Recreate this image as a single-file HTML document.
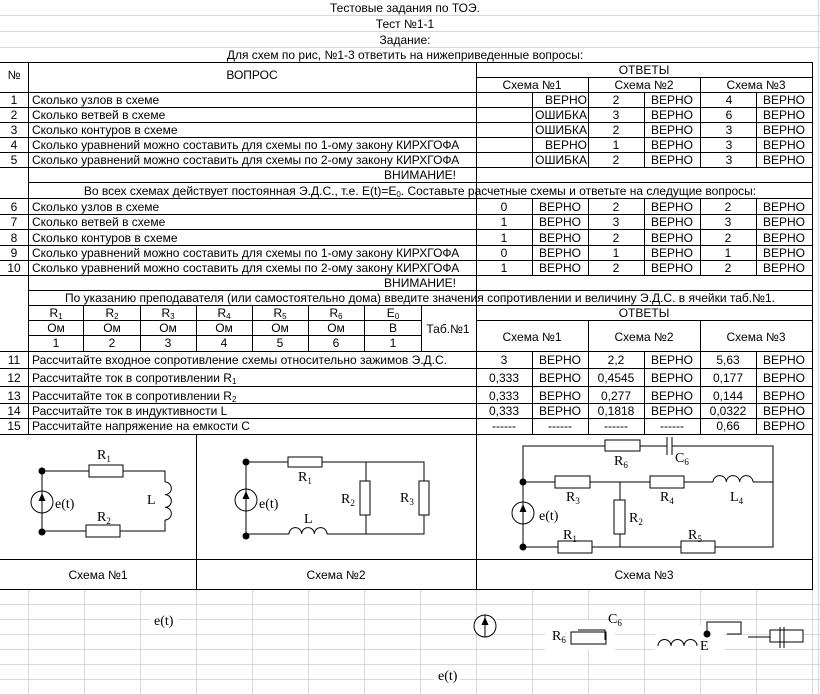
<!DOCTYPE html>
<html><head><meta charset="utf-8">
<style>
html,body{margin:0;padding:0;background:#fff;width:820px;height:695px;overflow:hidden}
svg{position:absolute;left:0;top:0}
text{font-family:"Liberation Sans",Arial,sans-serif;font-size:12px;fill:#000}
.s{font-family:"Liberation Serif","Times New Roman",serif;font-size:14px}
.m{text-anchor:middle}
.e{text-anchor:end}
</style></head><body>
<svg width="820" height="695" viewBox="0 0 820 695">
<g stroke="#d0d7e5" stroke-width="1" shape-rendering="crispEdges">
<line x1="0" y1="15.5" x2="820" y2="15.5"/><line x1="0" y1="31.5" x2="820" y2="31.5"/><line x1="0" y1="47.5" x2="820" y2="47.5"/>
<line x1="818.5" y1="0" x2="818.5" y2="695"/>
<line x1="0" y1="604.5" x2="820" y2="604.5"/><line x1="0" y1="619.5" x2="820" y2="619.5"/><line x1="0" y1="634.5" x2="820" y2="634.5"/><line x1="0" y1="649.5" x2="820" y2="649.5"/><line x1="0" y1="664.5" x2="820" y2="664.5"/><line x1="0" y1="679.5" x2="820" y2="679.5"/><line x1="0" y1="694.5" x2="820" y2="694.5"/>
<line x1="28.5" y1="589" x2="28.5" y2="695"/><line x1="84.5" y1="589" x2="84.5" y2="695"/><line x1="140.5" y1="589" x2="140.5" y2="695"/><line x1="196.5" y1="589" x2="196.5" y2="695"/><line x1="252.5" y1="589" x2="252.5" y2="695"/><line x1="308.5" y1="589" x2="308.5" y2="695"/><line x1="364.5" y1="589" x2="364.5" y2="695"/><line x1="420.5" y1="589" x2="420.5" y2="695"/><line x1="476.5" y1="589" x2="476.5" y2="695"/><line x1="532.5" y1="589" x2="532.5" y2="695"/><line x1="588.5" y1="589" x2="588.5" y2="695"/><line x1="644.5" y1="589" x2="644.5" y2="695"/><line x1="700.5" y1="589" x2="700.5" y2="695"/><line x1="756.5" y1="589" x2="756.5" y2="695"/><line x1="812.5" y1="589" x2="812.5" y2="695"/>
</g>
<rect x="150" y="612" width="28" height="18" fill="#fff"/>
<rect x="434" y="665" width="26" height="18" fill="#fff"/>
<rect x="545" y="620" width="70" height="30" fill="#fff"/>
<rect x="655" y="625" width="70" height="30" fill="#fff"/>

<g stroke="#000" stroke-width="1" shape-rendering="crispEdges">
<line x1="0" y1="62.5" x2="813" y2="62.5"/>
<line x1="476" y1="77.5" x2="813" y2="77.5"/>
<line x1="0" y1="92.5" x2="813" y2="92.5"/><line x1="0" y1="107.5" x2="813" y2="107.5"/><line x1="0" y1="122.5" x2="813" y2="122.5"/><line x1="0" y1="137.5" x2="813" y2="137.5"/><line x1="0" y1="152.5" x2="813" y2="152.5"/><line x1="0" y1="167.5" x2="813" y2="167.5"/>
<line x1="28" y1="182.5" x2="813" y2="182.5"/>
<line x1="0" y1="198.5" x2="813" y2="198.5"/><line x1="0" y1="214.5" x2="813" y2="214.5"/><line x1="0" y1="229.5" x2="813" y2="229.5"/><line x1="0" y1="245.5" x2="813" y2="245.5"/><line x1="0" y1="260.5" x2="813" y2="260.5"/><line x1="0" y1="275.5" x2="813" y2="275.5"/>
<line x1="28" y1="290.5" x2="813" y2="290.5"/><line x1="28" y1="305.5" x2="813" y2="305.5"/>
<line x1="28" y1="320.5" x2="421" y2="320.5"/><line x1="476" y1="320.5" x2="813" y2="320.5"/>
<line x1="28" y1="335.5" x2="421" y2="335.5"/>
<line x1="0" y1="351.5" x2="813" y2="351.5"/><line x1="0" y1="368.5" x2="813" y2="368.5"/><line x1="0" y1="386.5" x2="813" y2="386.5"/><line x1="0" y1="403.5" x2="813" y2="403.5"/><line x1="0" y1="418.5" x2="813" y2="418.5"/><line x1="0" y1="434.5" x2="813" y2="434.5"/>
<line x1="0" y1="559.5" x2="813" y2="559.5"/><line x1="0" y1="589.5" x2="813" y2="589.5"/>
<line x1="28.5" y1="62" x2="28.5" y2="434"/>
<line x1="476.5" y1="62" x2="476.5" y2="589"/>
<line x1="812.5" y1="62" x2="812.5" y2="589"/>
<line x1="196.5" y1="434" x2="196.5" y2="589"/>
<line x1="532.5" y1="92" x2="532.5" y2="167"/><line x1="644.5" y1="92" x2="644.5" y2="167"/><line x1="756.5" y1="92" x2="756.5" y2="167"/>
<line x1="588.5" y1="77" x2="588.5" y2="167"/><line x1="700.5" y1="77" x2="700.5" y2="167"/>
<line x1="532.5" y1="198" x2="532.5" y2="275"/><line x1="588.5" y1="198" x2="588.5" y2="275"/><line x1="644.5" y1="198" x2="644.5" y2="275"/><line x1="700.5" y1="198" x2="700.5" y2="275"/><line x1="756.5" y1="198" x2="756.5" y2="275"/>
<line x1="532.5" y1="351" x2="532.5" y2="434"/><line x1="644.5" y1="351" x2="644.5" y2="434"/><line x1="756.5" y1="351" x2="756.5" y2="434"/>
<line x1="588.5" y1="320" x2="588.5" y2="434"/><line x1="700.5" y1="320" x2="700.5" y2="434"/>
<line x1="83.5" y1="305" x2="83.5" y2="351"/><line x1="140.5" y1="305" x2="140.5" y2="351"/><line x1="196.5" y1="305" x2="196.5" y2="351"/><line x1="252.5" y1="305" x2="252.5" y2="351"/><line x1="308.5" y1="305" x2="308.5" y2="351"/><line x1="364.5" y1="305" x2="364.5" y2="351"/><line x1="421.5" y1="305" x2="421.5" y2="351"/>
</g>

<text x="405" y="12" class="m">Тестовые задания по ТОЭ.</text>
<text x="405" y="28" class="m">Тест №1-1</text>
<text x="405" y="44" class="m">Задание:</text>
<text x="405" y="59" class="m">Для схем по рис, №1-3 ответить на нижеприведенные вопросы:</text>

<text x="14" y="79" class="m">№</text>
<text x="252" y="79" class="m">ВОПРОС</text>
<text x="644" y="74" class="m">ОТВЕТЫ</text>
<text x="532" y="89" class="m">Схема №1</text><text x="644" y="89" class="m">Схема №2</text><text x="756" y="89" class="m">Схема №3</text>

<text x="14" y="104" class="m">1</text><text x="32" y="104">Сколько узлов в схеме</text>
<text x="14" y="119" class="m">2</text><text x="32" y="119">Сколько ветвей в схеме</text>
<text x="14" y="134" class="m">3</text><text x="32" y="134">Сколько контуров в схеме</text>
<text x="14" y="149" class="m">4</text><text x="32" y="149">Сколько уравнений можно составить для схемы по 1-ому закону КИРХГОФА</text>
<text x="14" y="164" class="m">5</text><text x="32" y="164">Сколько уравнений можно составить для схемы по 2-ому закону КИРХГОФА</text>

<text x="587" y="104" class="e">ВЕРНО</text><text x="616" y="104" class="m">2</text><text x="672" y="104" class="m">ВЕРНО</text><text x="729" y="104" class="m">4</text><text x="784" y="104" class="m">ВЕРНО</text>
<text x="587" y="119" class="e">ОШИБКА</text><text x="616" y="119" class="m">3</text><text x="672" y="119" class="m">ВЕРНО</text><text x="729" y="119" class="m">6</text><text x="784" y="119" class="m">ВЕРНО</text>
<text x="587" y="134" class="e">ОШИБКА</text><text x="616" y="134" class="m">2</text><text x="672" y="134" class="m">ВЕРНО</text><text x="729" y="134" class="m">3</text><text x="784" y="134" class="m">ВЕРНО</text>
<text x="587" y="149" class="e">ВЕРНО</text><text x="616" y="149" class="m">1</text><text x="672" y="149" class="m">ВЕРНО</text><text x="729" y="149" class="m">3</text><text x="784" y="149" class="m">ВЕРНО</text>
<text x="587" y="164" class="e">ОШИБКА</text><text x="616" y="164" class="m">2</text><text x="672" y="164" class="m">ВЕРНО</text><text x="729" y="164" class="m">3</text><text x="784" y="164" class="m">ВЕРНО</text>

<text x="420" y="179" class="m">ВНИМАНИЕ!</text>
<text x="420" y="195" class="m">Во всех схемах действует постоянная Э.Д.С., т.е. E(t)=E<tspan font-size="8" dy="2">0</tspan><tspan dy="-2">. Составьте расчетные схемы и ответьте на следущие вопросы:</tspan></text>

<text x="14" y="211" class="m">6</text><text x="32" y="211">Сколько узлов в схеме</text>
<text x="14" y="226" class="m">7</text><text x="32" y="226">Сколько ветвей в схеме</text>
<text x="14" y="242" class="m">8</text><text x="32" y="242">Сколько контуров в схеме</text>
<text x="14" y="257" class="m">9</text><text x="32" y="257">Сколько уравнений можно составить для схемы по 1-ому закону КИРХГОФА</text>
<text x="14" y="272" class="m">10</text><text x="32" y="272">Сколько уравнений можно составить для схемы по 2-ому закону КИРХГОФА</text>

<text x="504" y="211" class="m">0</text><text x="560" y="211" class="m">ВЕРНО</text><text x="616" y="211" class="m">2</text><text x="672" y="211" class="m">ВЕРНО</text><text x="728" y="211" class="m">2</text><text x="784" y="211" class="m">ВЕРНО</text>
<text x="504" y="226" class="m">1</text><text x="560" y="226" class="m">ВЕРНО</text><text x="616" y="226" class="m">3</text><text x="672" y="226" class="m">ВЕРНО</text><text x="728" y="226" class="m">3</text><text x="784" y="226" class="m">ВЕРНО</text>
<text x="504" y="242" class="m">1</text><text x="560" y="242" class="m">ВЕРНО</text><text x="616" y="242" class="m">2</text><text x="672" y="242" class="m">ВЕРНО</text><text x="728" y="242" class="m">2</text><text x="784" y="242" class="m">ВЕРНО</text>
<text x="504" y="257" class="m">0</text><text x="560" y="257" class="m">ВЕРНО</text><text x="616" y="257" class="m">1</text><text x="672" y="257" class="m">ВЕРНО</text><text x="728" y="257" class="m">1</text><text x="784" y="257" class="m">ВЕРНО</text>
<text x="504" y="272" class="m">1</text><text x="560" y="272" class="m">ВЕРНО</text><text x="616" y="272" class="m">2</text><text x="672" y="272" class="m">ВЕРНО</text><text x="728" y="272" class="m">2</text><text x="784" y="272" class="m">ВЕРНО</text>

<text x="420" y="287" class="m">ВНИМАНИЕ!</text>
<text x="420" y="302" class="m">По указанию преподавателя (или самостоятельно дома) введите значения сопротивлении и величину Э.Д.С. в ячейки таб.№1.</text>

<text x="56" y="317" class="m">R<tspan font-size="8" dy="2">1</tspan></text>
<text x="112" y="317" class="m">R<tspan font-size="8" dy="2">2</tspan></text>
<text x="168" y="317" class="m">R<tspan font-size="8" dy="2">3</tspan></text>
<text x="224" y="317" class="m">R<tspan font-size="8" dy="2">4</tspan></text>
<text x="280" y="317" class="m">R<tspan font-size="8" dy="2">5</tspan></text>
<text x="336" y="317" class="m">R<tspan font-size="8" dy="2">6</tspan></text>
<text x="393" y="317" class="m">E<tspan font-size="8" dy="2">0</tspan></text>
<text x="56" y="332" class="m">Ом</text><text x="112" y="332" class="m">Ом</text><text x="168" y="332" class="m">Ом</text><text x="224" y="332" class="m">Ом</text><text x="280" y="332" class="m">Ом</text><text x="336" y="332" class="m">Ом</text><text x="393" y="332" class="m">В</text>
<text x="56" y="347" class="m">1</text><text x="112" y="347" class="m">2</text><text x="168" y="347" class="m">3</text><text x="224" y="347" class="m">4</text><text x="280" y="347" class="m">5</text><text x="336" y="347" class="m">6</text><text x="393" y="347" class="m">1</text>
<text x="448" y="333" class="m">Таб.№1</text>
<text x="644" y="317" class="m">ОТВЕТЫ</text>
<text x="532" y="341" class="m">Схема №1</text><text x="644" y="341" class="m">Схема №2</text><text x="756" y="341" class="m">Схема №3</text>

<text x="14" y="364" class="m">11</text><text x="32" y="364">Рассчитайте входное сопротивление схемы относительно зажимов Э.Д.С.</text>
<text x="14" y="382" class="m">12</text><text x="32" y="382">Рассчитайте ток в сопротивлении R<tspan font-size="8" dy="2">1</tspan></text>
<text x="14" y="400" class="m">13</text><text x="32" y="400">Рассчитайте ток в сопротивлении R<tspan font-size="8" dy="2">2</tspan></text>
<text x="14" y="415" class="m">14</text><text x="32" y="415">Рассчитайте ток в индуктивности L</text>
<text x="14" y="430" class="m">15</text><text x="32" y="430">Рассчитайте напряжение на емкости C</text>

<text x="504" y="364" class="m">3</text><text x="560" y="364" class="m">ВЕРНО</text><text x="616" y="364" class="m">2,2</text><text x="672" y="364" class="m">ВЕРНО</text><text x="728" y="364" class="m">5,63</text><text x="784" y="364" class="m">ВЕРНО</text>
<text x="504" y="382" class="m">0,333</text><text x="560" y="382" class="m">ВЕРНО</text><text x="616" y="382" class="m">0,4545</text><text x="672" y="382" class="m">ВЕРНО</text><text x="728" y="382" class="m">0,177</text><text x="784" y="382" class="m">ВЕРНО</text>
<text x="504" y="400" class="m">0,333</text><text x="560" y="400" class="m">ВЕРНО</text><text x="616" y="400" class="m">0,277</text><text x="672" y="400" class="m">ВЕРНО</text><text x="728" y="400" class="m">0,144</text><text x="784" y="400" class="m">ВЕРНО</text>
<text x="504" y="415" class="m">0,333</text><text x="560" y="415" class="m">ВЕРНО</text><text x="616" y="415" class="m">0,1818</text><text x="672" y="415" class="m">ВЕРНО</text><text x="728" y="415" class="m">0,0322</text><text x="784" y="415" class="m">ВЕРНО</text>
<text x="504" y="430" class="m">------</text><text x="560" y="430" class="m">------</text><text x="616" y="430" class="m">------</text><text x="672" y="430" class="m">------</text><text x="728" y="430" class="m">0,66</text><text x="784" y="430" class="m">ВЕРНО</text>

<text x="98" y="579" class="m">Схема №1</text>
<text x="336" y="579" class="m">Схема №2</text>
<text x="644" y="579" class="m">Схема №3</text>

<g stroke="#000" stroke-width="1" fill="none">
<path d="M42,471 H165 V482 M165,520 V531 H42 V471"/>
<path d="M165,482 a6.33,6.33 0 0 1 0,12.67 a6.33,6.33 0 0 1 0,12.67 a6.33,6.33 0 0 1 0,12.67"/>
<rect x="89" y="465" width="34" height="12" fill="#fff"/>
<rect x="86" y="525" width="34" height="12" fill="#fff"/>
<circle cx="42" cy="502" r="11" fill="#fff"/>
<line x1="42" y1="491" x2="42" y2="513"/>
<path d="M246,462 H424 V534 H327 M289,534 H246 V462 M366,462 V534"/>
<path d="M289,534 a6.33,6.33 0 0 1 12.67,0 a6.33,6.33 0 0 1 12.67,0 a6.33,6.33 0 0 1 12.67,0"/>
<rect x="288" y="457" width="34" height="10" fill="#fff"/>
<rect x="360" y="481" width="10" height="34" fill="#fff"/>
<rect x="419" y="481" width="10" height="34" fill="#fff"/>
<circle cx="246" cy="500" r="11" fill="#fff"/>
<line x1="246" y1="489" x2="246" y2="511"/>
<path d="M523,547 V446 H667 M672,446 H773 V547 H523 M523,482 H713 M753,482 H773 M620,482 V547"/>
<path d="M713,482 a6.67,6.67 0 0 1 13.33,0 a6.67,6.67 0 0 1 13.33,0 a6.67,6.67 0 0 1 13.33,0"/>
<line x1="667" y1="437" x2="667" y2="455"/><line x1="672" y1="437" x2="672" y2="455"/>
<rect x="605" y="440" width="35" height="11" fill="#fff"/>
<rect x="555" y="476" width="35" height="12" fill="#fff"/>
<rect x="650" y="476" width="34" height="12" fill="#fff"/>
<rect x="614" y="500" width="11" height="34" fill="#fff"/>
<rect x="558" y="541" width="34" height="12" fill="#fff"/>
<rect x="681" y="541" width="34" height="12" fill="#fff"/>
<circle cx="523" cy="513" r="11" fill="#fff"/>
<line x1="523" y1="502" x2="523" y2="524"/>
<circle cx="485" cy="626" r="11" fill="#fff"/>
<line x1="485" y1="615" x2="485" y2="637"/>
<rect x="571" y="632" width="35" height="12" fill="#fff"/>
<path d="M578,630 H605 V640"/>
<path d="M658,646 a6.5,6.5 0 0 1 13,0 a6.5,6.5 0 0 1 13,0 a6.5,6.5 0 0 1 13,0"/>
<path d="M707,634 V622 H741 V634 H727"/>
<path d="M748,637 H770"/>
<rect x="770" y="630" width="33" height="12" fill="#fff"/>
<line x1="780" y1="627" x2="780" y2="648"/><line x1="784" y1="627" x2="784" y2="648"/>
</g>
<g fill="#000">
<circle cx="42" cy="471" r="3.5"/><circle cx="42" cy="532" r="3.5"/>
<circle cx="246" cy="462" r="3.5"/><circle cx="246" cy="536" r="3.5"/>
<circle cx="523" cy="482" r="3.5"/><circle cx="523" cy="547" r="3.5"/>
<circle cx="707" cy="634" r="3.5"/>
<path d="M42,493 l-3.5,8 h7 z"/><path d="M246,491 l-3.5,8 h7 z"/><path d="M523,504 l-3.5,8 h7 z"/><path d="M485,617 l-3.5,8 h7 z"/>
</g>
<text class="s" x="97" y="459">R<tspan font-size="9" dy="3">1</tspan></text>
<text class="s" x="97" y="521">R<tspan font-size="9" dy="3">2</tspan></text>
<text class="s" x="147" y="504">L</text>
<text class="s" x="55" y="508">e(t)</text>
<text class="s" x="298" y="481">R<tspan font-size="9" dy="3">1</tspan></text>
<text class="s" x="341" y="503">R<tspan font-size="9" dy="3">2</tspan></text>
<text class="s" x="400" y="502">R<tspan font-size="9" dy="3">3</tspan></text>
<text class="s" x="304" y="523">L</text>
<text class="s" x="259" y="508">e(t)</text>
<text class="s" x="614" y="465">R<tspan font-size="9" dy="3">6</tspan></text>
<text class="s" x="675" y="462">C<tspan font-size="9" dy="3">6</tspan></text>
<text class="s" x="566" y="501">R<tspan font-size="9" dy="3">3</tspan></text>
<text class="s" x="660" y="501">R<tspan font-size="9" dy="3">4</tspan></text>
<text class="s" x="730" y="501">L<tspan font-size="9" dy="3">4</tspan></text>
<text class="s" x="629" y="522">R<tspan font-size="9" dy="3">2</tspan></text>
<text class="s" x="563" y="539">R<tspan font-size="9" dy="3">1</tspan></text>
<text class="s" x="688" y="539">R<tspan font-size="9" dy="3">5</tspan></text>
<text class="s" x="539" y="520">e(t)</text>
<text class="s" x="154" y="625">e(t)</text>
<text class="s" x="438" y="680">e(t)</text>
<text class="s" x="552" y="640">R<tspan font-size="9" dy="3">6</tspan></text>
<text class="s" x="608" y="623">C<tspan font-size="9" dy="3">6</tspan></text>
<text class="s" x="700" y="650">E</text>
</svg>
</body></html>
